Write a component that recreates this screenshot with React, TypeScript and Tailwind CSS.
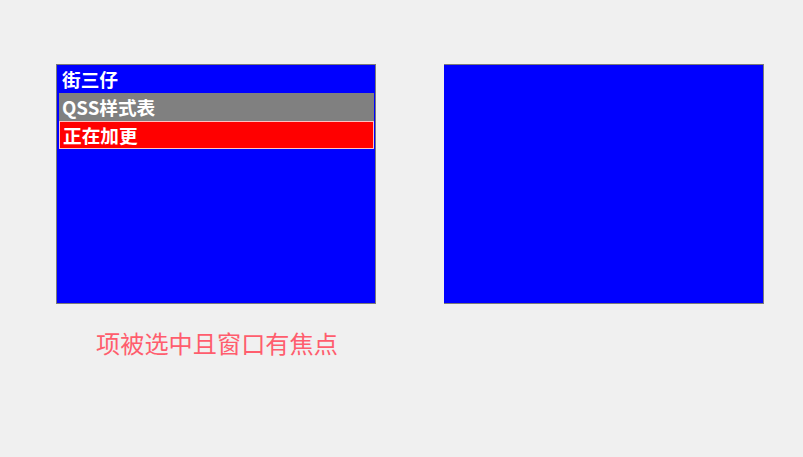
import React from "react";

export default function App() {
  const cjk = { fontFamily: '"Noto Sans CJK SC", "Noto Sans", sans-serif' };
  return (
    <div className="w-[803px] h-[457px] bg-[#f0f0f0] pt-[64px] pl-[56px]" style={cjk}>
      <div className="flex gap-[68px]">
        <div className="w-[320px] h-[240px] border border-[#7a7a7a] bg-[#0000ff] pl-[2px] pr-[1px] flex flex-col">
          <div className="h-[28px] flex items-center pl-[3px] text-white font-bold text-[18.67px]">街三仔</div>
          <div className="h-[28px] flex items-center pl-[3px] text-white font-bold text-[18.67px] bg-[#808080]">QSS样式表</div>
          <div className="h-[28px] flex items-center pl-[3px] text-white font-bold text-[18.67px] bg-[#ff0000] border border-[#ffc0c0]">正在加更</div>
        </div>
        <div className="w-[320px] h-[240px] border border-l-0 border-[#7a7a7a] bg-[#0000ff]" />
      </div>
      <div className="mt-[27px] ml-[40px] text-[24.2px] leading-[24px] text-[#ff5d6d]">项被选中且窗口有焦点</div>
    </div>
  );
}
